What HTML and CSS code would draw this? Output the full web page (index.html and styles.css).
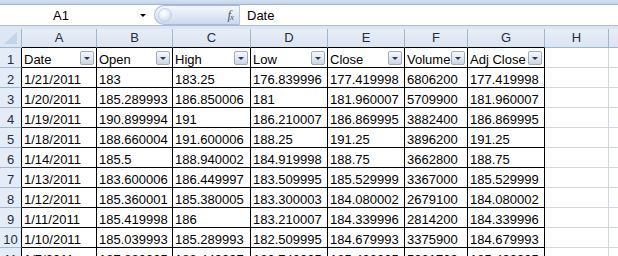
FILE: index.html
```html
<!DOCTYPE html>
<html>
<head>
<meta charset="utf-8">
<link rel="stylesheet" href="styles.css">
</head>
<body>
<div class="app">
  <div class="band"></div>
  <div class="fbar">
    <div class="namebox"><span class="ref">A1</span><span class="nbarrow"></span></div>
    <div class="fxcap"><span class="grip"></span><span class="fx">f<sub>x</sub></span></div>
    <div class="formula">Date</div>
  </div>
  <div class="gap"></div>
  <div class="sheet">
    <div class="corner"><svg width="14" height="13" viewBox="0 0 14 13"><polygon points="13,0 13,12 0,12" fill="#c3d3e8"/></svg></div>
    <div class="ch dk">A</div><div class="ch dk">B</div><div class="ch dk">C</div><div class="ch dk">D</div><div class="ch dk">E</div><div class="ch dk">F</div><div class="ch dk">G</div><div class="ch">H</div><div class="ch"></div>

    <div class="rh dk">1</div>
    <div class="c d">Date<span class="flt"></span></div><div class="c d">Open<span class="flt"></span></div><div class="c d">High<span class="flt"></span></div><div class="c d">Low<span class="flt"></span></div><div class="c d">Close<span class="flt"></span></div><div class="c d">Volume<span class="flt"></span></div><div class="c d">Adj Close<span class="flt"></span></div><div class="c"></div><div class="c"></div>

    <div class="rh dk">2</div>
    <div class="c d">1/21/2011</div><div class="c d">183</div><div class="c d">183.25</div><div class="c d">176.839996</div><div class="c d">177.419998</div><div class="c d">6806200</div><div class="c d">177.419998</div><div class="c"></div><div class="c"></div>

    <div class="rh dk">3</div>
    <div class="c d">1/20/2011</div><div class="c d">185.289993</div><div class="c d">186.850006</div><div class="c d">181</div><div class="c d">181.960007</div><div class="c d">5709900</div><div class="c d">181.960007</div><div class="c"></div><div class="c"></div>

    <div class="rh dk">4</div>
    <div class="c d">1/19/2011</div><div class="c d">190.899994</div><div class="c d">191</div><div class="c d">186.210007</div><div class="c d">186.869995</div><div class="c d">3882400</div><div class="c d">186.869995</div><div class="c"></div><div class="c"></div>

    <div class="rh dk">5</div>
    <div class="c d">1/18/2011</div><div class="c d">188.660004</div><div class="c d">191.600006</div><div class="c d">188.25</div><div class="c d">191.25</div><div class="c d">3896200</div><div class="c d">191.25</div><div class="c"></div><div class="c"></div>

    <div class="rh dk">6</div>
    <div class="c d">1/14/2011</div><div class="c d">185.5</div><div class="c d">188.940002</div><div class="c d">184.919998</div><div class="c d">188.75</div><div class="c d">3662800</div><div class="c d">188.75</div><div class="c"></div><div class="c"></div>

    <div class="rh dk">7</div>
    <div class="c d">1/13/2011</div><div class="c d">183.600006</div><div class="c d">186.449997</div><div class="c d">183.509995</div><div class="c d">185.529999</div><div class="c d">3367000</div><div class="c d">185.529999</div><div class="c"></div><div class="c"></div>

    <div class="rh dk">8</div>
    <div class="c d">1/12/2011</div><div class="c d">185.360001</div><div class="c d">185.380005</div><div class="c d">183.300003</div><div class="c d">184.080002</div><div class="c d">2679100</div><div class="c d">184.080002</div><div class="c"></div><div class="c"></div>

    <div class="rh dk">9</div>
    <div class="c d">1/11/2011</div><div class="c d">185.419998</div><div class="c d">186</div><div class="c d">183.210007</div><div class="c d">184.339996</div><div class="c d">2814200</div><div class="c d">184.339996</div><div class="c"></div><div class="c"></div>

    <div class="rh dk">10</div>
    <div class="c d">1/10/2011</div><div class="c d">185.039993</div><div class="c d">185.289993</div><div class="c d">182.509995</div><div class="c d">184.679993</div><div class="c d">3375900</div><div class="c d">184.679993</div><div class="c"></div><div class="c"></div>

    <div class="rh dk">11</div>
    <div class="c d">1/7/2011</div><div class="c d">187.880005</div><div class="c d">188.449997</div><div class="c d">183.740005</div><div class="c d">185.490005</div><div class="c d">5221700</div><div class="c d">185.490005</div><div class="c"></div><div class="c"></div>
  </div>
</div>
</body>
</html>
```

FILE: styles.css
```css
html, body {
  margin: 0;
  padding: 0;
  background: #ffffff;
  overflow: hidden;
}
.app {
  width: 618px;
  height: 256px;
  overflow: hidden;
  font-family: "Liberation Sans", Arial, sans-serif;
  font-size: 13px;
  color: #000;
}
.band {
  height: 4px;
  background: linear-gradient(#d3e0f0, #c2d4ea);
}
.fbar {
  height: 20px;
  border-top: 1px solid #9fb5d0;
  border-bottom: 1px solid #a9bdd6;
  background: #ffffff;
  display: flex;
  align-items: stretch;
}
.namebox {
  width: 154px;
  display: flex;
  align-items: center;
  position: relative;
}
.ref {
  flex: 1;
  text-align: center;
  padding-right: 18px;
  font-size: 13px;
}
.nbarrow {
  width: 0;
  height: 0;
  border-left: 3px solid transparent;
  border-right: 3px solid transparent;
  border-top: 3px solid #000;
  margin-right: 8px;
}
.fxcap {
  width: 86px;
  margin: 0;
  box-sizing: border-box;
  border: 1px solid #a7bcd7;
  border-right: 1px solid #b8c9de;
  border-radius: 10px 0 0 10px;
  background: linear-gradient(#f4f7fc 0%, #e2eaf5 50%, #cbd9ec 100%);
  display: flex;
  align-items: center;
  justify-content: space-between;
  padding: 0 6px 0 3px;
}
.grip {
  width: 12px;
  height: 12px;
  border-radius: 50%;
  background: radial-gradient(circle at 40% 35%, #ffffff 0%, #e4ecf6 50%, #b9cbe2 100%);
  border: 1px solid #c3d2e6;
}
.fx {
  font-family: "Liberation Serif", "Times New Roman", serif;
  font-style: italic;
  font-size: 13px;
  color: #4d5a6b;
  letter-spacing: -1px;
}
.fx sub {
  font-size: 9px;
  vertical-align: -1px;
}
.formula {
  padding-left: 7px;
  display: flex;
  align-items: center;
  font-size: 13px;
}
.gap {
  height: 3px;
  background: #dce6f2;
}
.sheet {
  display: grid;
  grid-template-columns: 22px 75px 76px 78px 77px 77px 63px 77px 64px 30px;
  grid-template-rows: 19px repeat(11, 20px);
}
.sheet > div {
  box-sizing: border-box;
  overflow: hidden;
  white-space: nowrap;
}
.corner {
  background: #dde7f3;
  border-right: 1px solid #9eb6ce;
  border-bottom: 1px solid #9eb6ce;
  display: flex;
  align-items: flex-end;
  justify-content: flex-end;
  padding: 0 3px 2px 0;
}
.corner svg { display: block; }
.ch {
  background: linear-gradient(#e6edf7, #dbe5f1);
  border-right: 1px solid #9eb6ce;
  border-bottom: 1px solid #9eb6ce;
  text-align: center;
  line-height: 18px;
  color: #1f2d3d;
}
.ch.dk {
  border-bottom-color: #000;
}
.rh {
  background: #e4ecf7;
  border-right: 1px solid #9eb6ce;
  border-bottom: 1px solid #9eb6ce;
  text-align: center;
  padding-top: 3px;
  line-height: 17px;
  color: #1f2d3d;
}
.rh.dk {
  border-right-color: #000;
}
.c {
  border-right: 1px solid #d0d7e5;
  border-bottom: 1px solid #d0d7e5;
  padding-left: 2px;
  padding-top: 3px;
  line-height: 17px;
  position: relative;
}
.c.d {
  border-right-color: #000;
  border-bottom-color: #000;
}
.flt {
  position: absolute;
  right: 2px;
  top: 3px;
  width: 14px;
  height: 14px;
  box-sizing: border-box;
  border: 1px solid #a3acba;
  border-radius: 2px;
  background: linear-gradient(#f6f8fb, #dfe5ee 60%, #ccd5e2);
}
.flt::after {
  content: "";
  position: absolute;
  left: 3px;
  top: 5px;
  border-left: 3px solid transparent;
  border-right: 3px solid transparent;
  border-top: 3px solid #2a3a5c;
}
```
